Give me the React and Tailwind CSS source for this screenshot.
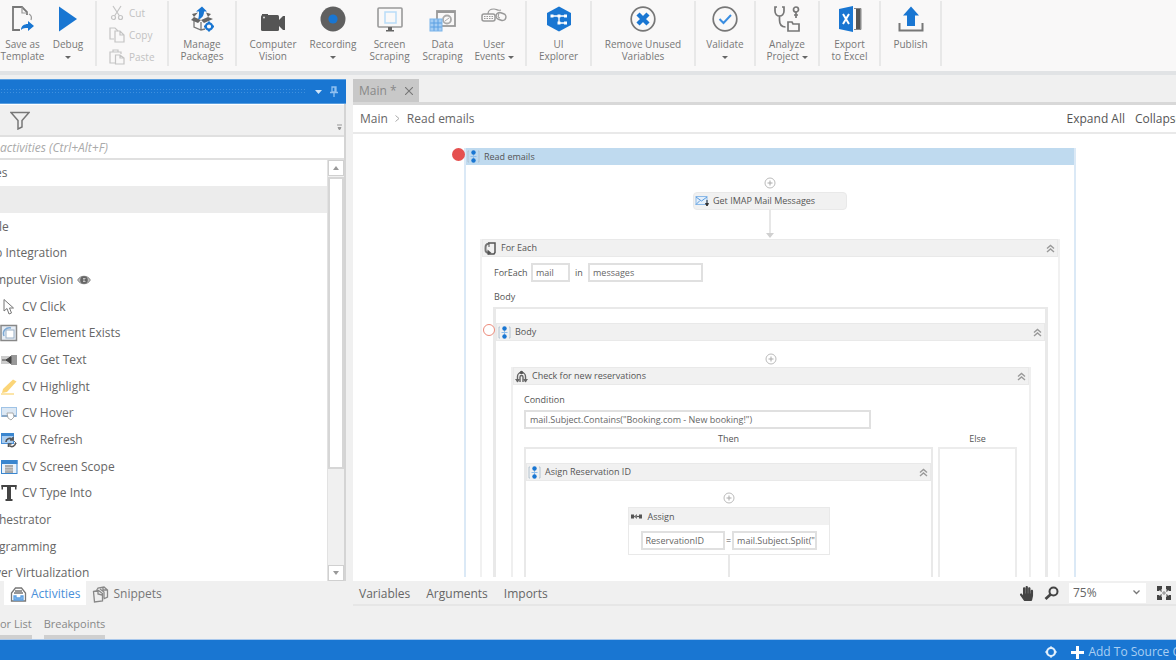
import { useState } from "react";
import { FaHandPaper } from "react-icons/fa";

/* ---------- Ribbon icons ---------- */

const SaveTemplateIcon = () => (
  <svg width="26" height="28" viewBox="0 0 26 28" fill="none">
    <path d="M17 10V7l-5-5H3v23h7" stroke="#777" strokeWidth="1.8" />
    <path d="M12 2v6h6M19 9c2 1 3 3 2 6" stroke="#999" strokeWidth="1.2" />
    <path d="M11 25c0-4 3-6 7-6v-3l6 5-6 5v-3c-3 0-5 0-7 2z" fill="#1976d2" />
  </svg>
);

const DebugIcon = () => (
  <svg width="20" height="28" viewBox="0 0 20 28">
    <path d="M1 1.500v25l18-12.500z" fill="#1976d2" />
  </svg>
);

const PackagesIcon = () => (
  <svg width="26" height="28" viewBox="0 0 26 28" fill="none">
    <path d="M5 14v8l7 3 4-1M12 17v8" stroke="#777" strokeWidth="1.300" />
    <path d="M5 12l7 3-3 3-7-3zM19 12l-7 3 3 3 9-4zM5 12l-2-3 6-1.500M19 12l3-3-5-1.500" fill="#666" />
    <path d="M13 1.500l5 5h-3c0 4-2 7-6 8 1-3 1-5 1-8H7z" fill="#1976d2" />
    <circle cx="20" cy="21.500" r="3.200" stroke="#1976d2" strokeWidth="2.200" />
    <path d="M20 16.500v1.500M20 25v1.500M15 21.500h1.500M23.500 21.500h1.500" stroke="#1976d2" strokeWidth="2" />
  </svg>
);

const CameraIcon = () => (
  <svg width="28" height="28" viewBox="0 0 28 28" fill="#555">
    <rect x="2" y="10" width="18" height="16" rx="1.500" />
    <rect x="3" y="9" width="6" height="3" />
    <path d="M20 15l4-4h2v14h-2l-4-4z" />
    <circle cx="5" cy="12.500" r="1" fill="#ddd" />
  </svg>
);

const RecordingIcon = () => (
  <svg width="28" height="28" viewBox="0 0 28 28">
    <circle cx="14" cy="14" r="12.500" fill="#606060" />
    <circle cx="14" cy="14" r="4.600" fill="#1976d2" />
  </svg>
);

const ScreenIcon = () => (
  <svg width="28" height="28" viewBox="0 0 28 28" fill="none">
    <rect x="2" y="3" width="24" height="19" rx="1" stroke="#999" strokeWidth="1.600" />
    <rect x="9" y="7" width="11" height="11" stroke="#b9dcf7" strokeWidth="1.500" />
    <path d="M12 22h4v3h2v1.500h-8V25h2z" fill="#666" />
  </svg>
);

const DataIcon = () => (
  <svg width="28" height="28" viewBox="0 0 28 28" fill="none">
    <rect x="8" y="6" width="18" height="15" stroke="#999" strokeWidth="1.800" />
    <path d="M8 7h18" stroke="#999" strokeWidth="2" />
    <circle cx="18" cy="14.500" r="4" stroke="#aaa" strokeWidth="1.800" />
    <path d="M16 16l4-3" stroke="#aaa" />
    <rect x="1" y="14" width="12" height="12" fill="#a5cdf3" />
    <path d="M1 18h12M1 22h12M5 14v12M9 14v12" stroke="#5a9fe2" />
    <rect x="1" y="14" width="12" height="12" stroke="#7ab3e9" />
  </svg>
);

const UserEventsIcon = () => (
  <svg width="28" height="28" viewBox="0 0 28 28" fill="none" stroke="#999">
    <rect x="2" y="9" width="13" height="7" rx="2" strokeWidth="1.500" />
    <path d="M4 11.500h9M4 13.500h9" strokeDasharray="1.500 1" />
    <path d="M8 9c0-4 3-5 6-5s3 2 7 1" strokeWidth="1.200" />
    <rect x="16" y="8" width="10" height="7" rx="3.500" transform="rotate(20 21 11.500)" strokeWidth="1.500" />
    <path d="M19 8l-1 4 2 1" />
  </svg>
);

const ExplorerIcon = () => (
  <svg width="28" height="28" viewBox="0 0 28 28" fill="none">
    <path d="M14 1.500l12 6.500v12l-12 6.500L2 20V8z" fill="#1976d2" />
    <path d="M7 11h14M14 11v7h7" stroke="#fff" strokeWidth="1.300" />
    <g fill="#fff">
      <rect x="5.500" y="9.500" width="3" height="3" />
      <rect x="12.500" y="9.500" width="3" height="3" />
      <rect x="19" y="9.500" width="3" height="3" />
      <rect x="12.500" y="16.500" width="3" height="3" />
      <rect x="19" y="16.500" width="3" height="3" />
    </g>
  </svg>
);

const RemoveIcon = () => (
  <svg width="28" height="28" viewBox="0 0 28 28" fill="none">
    <circle cx="14" cy="14" r="11.800" stroke="#777" strokeWidth="1.700" />
    <path d="M9 9l10 10M19 9L9 19" stroke="#1976d2" strokeWidth="4.400" />
  </svg>
);

const ValidateIcon = () => (
  <svg width="28" height="28" viewBox="0 0 28 28" fill="none">
    <circle cx="14" cy="14" r="11.800" stroke="#777" strokeWidth="1.700" />
    <path d="M8.500 14l4 4 7.500-8" stroke="#3a8de0" strokeWidth="2" />
  </svg>
);

const AnalyzeIcon = () => (
  <svg width="28" height="28" viewBox="0 0 28 28" fill="none" stroke="#777" strokeWidth="1.700">
    <path d="M4 2H2v4c0 3 2 5 4.500 5S11 9 11 6V2H9M6.500 11v4c0 4 2 7 6 7" />
    <path d="M15 17h4l1 2h6v7H15z" />
    <circle cx="23" cy="4.500" r="2.500" />
    <path d="M23 7v6M21 10h4" />
  </svg>
);

const ExcelIcon = () => (
  <svg width="26" height="28" viewBox="0 0 26 28" fill="none">
    <path d="M2 4l14-3v26L2 24z" fill="#1976d2" />
    <path d="M6 9l6 10M12 9L6 19" stroke="#fff" strokeWidth="2" />
    <path d="M17 3.500h7v21h-7" stroke="#888" />
    <rect x="19" y="4" width="4.500" height="20" fill="#555" />
  </svg>
);

const PublishIcon = () => (
  <svg width="28" height="28" viewBox="0 0 28 28" fill="none">
    <path d="M14 1.500l8 9h-4V21h-8V10.500H6z" fill="#1976d2" />
    <path d="M2.500 18v7.500h23V18" stroke="#777" strokeWidth="2" />
  </svg>
);

const CutIcon = () => (
  <svg width="16" height="16" viewBox="0 0 16 16" fill="none" stroke="#c4c4c4" strokeWidth="1.200">
    <path d="M4 1l6.500 10M12 1L5.500 11" />
    <circle cx="4.500" cy="12.500" r="2" />
    <circle cx="11.500" cy="12.500" r="2" />
  </svg>
);

const CopyIcon = () => (
  <svg width="16" height="16" viewBox="0 0 16 16" fill="none" stroke="#c4c4c4" strokeWidth="1.200">
    <path d="M5 12H1V1h5l3 3" />
    <path d="M6 4h5l4 4v7H6zM11 4v4h4" />
  </svg>
);

const PasteIcon = () => (
  <svg width="16" height="16" viewBox="0 0 16 16" fill="none" stroke="#c4c4c4" strokeWidth="1.200">
    <path d="M6 14H1V3h11v2M4 3V1h5v2M6.500 6H11l4 3v6H6.500zM11 6v3h4" />
  </svg>
);

const Caret = () => (
  <svg width="6" height="3" viewBox="0 0 6 3" className="inline-block" fill="#666">
    <path d="M0 0h6L3 3z" />
  </svg>
);

/* ---------- Activity list icons ---------- */

const EyeIcon = () => (
  <svg width="14" height="12" viewBox="0 0 14 12" fill="none">
    <path d="M.7 6C3 1 11 1 13.300 6 11 11 3 11 .7 6z" fill="#bbb" stroke="#888" />
    <circle cx="7" cy="6" r="3.800" fill="#666" />
    <path d="M6 4.500h2.500M6 6h2M6 7.500h2.500" stroke="#ddd" strokeWidth=".8" />
  </svg>
);

const ClickIcon = () => (
  <svg width="18" height="18" viewBox="0 0 18 18" fill="#fff" stroke="#777">
    <path d="M4 1.500v11.500l3-2.500 2 5.500 2.500-1-2-5h4z" />
  </svg>
);

const ExistsIcon = () => (
  <svg width="18" height="18" viewBox="0 0 18 18" fill="none">
    <rect x="1" y="1.500" width="15.500" height="15" fill="#e6edf5" stroke="#888" strokeWidth="1.500" />
    <rect x="6" y="6" width="8" height="8" fill="#fff" stroke="#9ab0c6" />
    <path d="M4 12C2 7 6 3 11 4" stroke="#7ba8d4" strokeWidth="1.500" />
  </svg>
);

const GetTextIcon = () => (
  <svg width="18" height="18" viewBox="0 0 18 18" fill="none">
    <rect x="1" y="5" width="16" height="8" fill="#ccc" />
    <rect x="11" y="4" width="6" height="10" fill="#999" />
    <path d="M2 9h5M6 9l5-3.500v7z" stroke="#444" fill="#444" />
  </svg>
);

const HighlightIcon = () => (
  <svg width="18" height="18" viewBox="0 0 18 18">
    <path d="M3 11L13 1.500l3.500 2L7 14l-5 1z" fill="#fbd578" />
    <path d="M1 16h13" stroke="#fbdc8c" strokeWidth="1.500" />
  </svg>
);

const HoverIcon = () => (
  <svg width="18" height="18" viewBox="0 0 18 18">
    <rect x="1.500" y="3.500" width="15" height="9" fill="#dce8f4" stroke="#9fc3e6" />
    <path d="M2 11h14v2H2z" fill="#8aa7c4" />
    <path d="M7 9l1 5 3 2 3-3-1-4z" fill="#fff" stroke="#999" strokeWidth=".8" />
  </svg>
);

const RefreshIcon = () => (
  <svg width="18" height="18" viewBox="0 0 18 18" fill="none">
    <rect x="1.500" y="2.500" width="12" height="10" fill="#a9cdf0" stroke="#4a90d9" />
    <path d="M1 3.500h13" stroke="#3a86cf" strokeWidth="3" />
    <path d="M6 11a3.500 3.500 0 016-2.500M13 6v3h-3M15.500 12a3.500 3.500 0 01-6 2.500M8.500 16v-3h3" stroke="#555" strokeWidth="1.600" />
    <path d="M13 9l3.500 3.500" stroke="#777" />
  </svg>
);

const ScopeIcon = () => (
  <svg width="18" height="18" viewBox="0 0 18 18">
    <rect x="1.500" y="2.500" width="15.500" height="13" fill="#e9f2fb" stroke="#3a86cf" />
    <rect x="1" y="2" width="16.500" height="4" fill="#3a86cf" />
    <path d="M5 7h8v8H5z" fill="#aaa" />
    <path d="M5 9.500h8M5 12h8" stroke="#ccc" />
  </svg>
);

const TypeIcon = () => (
  <svg width="18" height="18" viewBox="0 0 18 18" fill="#444">
    <rect x="1.500" y="1" width="15" height="2" />
    <rect x="1.500" y="1" width="1.500" height="4.500" />
    <rect x="15" y="1" width="1.500" height="4.500" />
    <rect x="7" y="1" width="4" height="15" />
    <rect x="5.500" y="15" width="7" height="2" />
  </svg>
);

/* ---------- Designer icons ---------- */

const SequenceIcon = () => (
  <svg width="13" height="13" viewBox="0 0 13 13" fill="none">
    <path d="M2 1H1v11h1M11 1h1v11h-1" stroke="#aebfce" strokeWidth=".9" />
    <path d="M6.500 3v7M3.500 6.500h6" stroke="#8fbdea" />
    <circle cx="6.500" cy="2.500" r="2.200" fill="#1976d2" />
    <circle cx="6.500" cy="10.500" r="2.200" fill="#1976d2" />
  </svg>
);

const LoopIcon = () => (
  <svg width="13" height="13" viewBox="0 0 13 13" fill="none">
    <path d="M4 1h7v9.500L10 12H4" stroke="#555" strokeWidth="1.500" />
    <path d="M5 1.500C1.500 2 1.500 4 1.500 6.500s0 4 3 4.500" stroke="#777" strokeWidth="2" />
    <path d="M3.500 7.500l4 3.500-4 2z" fill="#555" />
    <path d="M5 1v4" stroke="#555" />
  </svg>
);

const IfIcon = () => (
  <svg width="13" height="13" viewBox="0 0 13 13" fill="none">
    <path d="M2.500 12V6.500a4 4 0 018 0V12M5 12V7a1.500 1.500 0 013 0v5" stroke="#666" strokeWidth="1.400" />
    <path d="M0 9l2.500 3.500L5 9zM8 9l2.500 3.500L13 9z" fill="#666" />
    <circle cx="6.500" cy="2.500" r="1.700" fill="#555" />
  </svg>
);

const AssignIcon = () => (
  <svg width="13" height="9" viewBox="0 0 13 9" fill="none">
    <path d="M1 4.500h11" stroke="#555" strokeWidth="1.200" />
    <path d="M1 2.500h3v4H1zM9 2.500h3v4H9z" fill="#555" />
    <path d="M7 2L4 4.500 7 7" fill="#777" />
  </svg>
);

const MailIcon = () => (
  <svg width="14" height="12" viewBox="0 0 14 12" fill="none">
    <rect x="1" y="1.500" width="11" height="8" fill="#e4effa" stroke="#8bb9e8" />
    <path d="M1 2l5.500 4L12 2M1 9.500l4-4" stroke="#5c9ddf" />
    <path d="M12 5v5M10.500 8.500l1.500 2.500 1.500-2.500z" stroke="#333" fill="#333" />
  </svg>
);

const PlusCircle = () => (
  <button aria-label="Add activity" className="block">
    <svg width="12" height="12" viewBox="0 0 12 12" fill="none" stroke="#bbb">
      <circle cx="6" cy="6" r="5" />
      <path d="M6 3.500v5M3.500 6h5" stroke="#aaa" />
    </svg>
  </button>
);

const CollapseIcon = () => (
  <svg width="9" height="9" viewBox="0 0 9 9" fill="none" stroke="#999" strokeWidth="1.400">
    <path d="M1 4.500l3.500-3 3.500 3M1 8l3.500-3L8 8" />
  </svg>
);

/* ---------- Ribbon ---------- */

function Tool({ icon, lines, caret, className }) {
  return (
    <button className={`flex flex-col items-center pt-1 ${className}`}>
      {icon}
      <span className="mt-[5px] text-[10px] leading-3 text-center whitespace-nowrap">
        {lines[0]}
        <br />
        {lines[1]} {caret && <Caret />}
      </span>
    </button>
  );
}

function Group({ children }) {
  return <div className="flex shrink-0 border-r-2 border-[#e8e8e8] h-[65px]">{children}</div>;
}

function Ribbon() {
  return (
    <header className="flex overflow-hidden bg-[#f9f8f8] text-[#777] border-b-4 border-[#e1e3e5] h-[75px] pt-px shrink-0">
      <Group>
        <Tool className="w-[45px]" icon={<SaveTemplateIcon />} lines={["Save as", "Template"]} />
        <Tool className="w-[46px] mr-1" icon={<DebugIcon />} lines={["Debug", ""]} caret />
      </Group>
      <Group>
        <div className="flex flex-col gap-[6px] w-[70px] pl-3 pt-1 text-[10px] leading-4 text-[#c2c2c2]">
          <button className="flex items-center gap-1"><CutIcon />Cut</button>
          <button className="flex items-center gap-1"><CopyIcon />Copy</button>
          <button className="flex items-center gap-1"><PasteIcon />Paste</button>
        </div>
      </Group>
      <Group>
        <Tool className="w-[66px]" icon={<PackagesIcon />} lines={["Manage", "Packages"]} />
      </Group>
      <Group>
        <Tool className="w-[58px] ml-[7px]" icon={<CameraIcon />} lines={["Computer", "Vision"]} />
        <Tool className="w-[62px]" icon={<RecordingIcon />} lines={["Recording", ""]} caret />
        <Tool className="w-[51px]" icon={<ScreenIcon />} lines={["Screen", "Scraping"]} />
        <Tool className="w-[55px]" icon={<DataIcon />} lines={["Data", "Scraping"]} />
        <Tool className="w-[48px] mr-[7px]" icon={<UserEventsIcon />} lines={["User", "Events"]} caret />
      </Group>
      <Group>
        <Tool className="w-[63px]" icon={<ExplorerIcon />} lines={["UI", "Explorer"]} />
      </Group>
      <Group>
        <Tool className="w-[102px]" icon={<RemoveIcon />} lines={["Remove Unused", "Variables"]} />
      </Group>
      <Group>
        <Tool className="w-[58px]" icon={<ValidateIcon />} lines={["Validate", ""]} caret />
      </Group>
      <Group>
        <Tool className="w-[62px]" icon={<AnalyzeIcon />} lines={["Analyze", "Project"]} caret />
      </Group>
      <Group>
        <Tool className="w-[59px]" icon={<ExcelIcon />} lines={["Export", "to Excel"]} />
      </Group>
      <Group>
        <Tool className="w-[59px]" icon={<PublishIcon />} lines={["Publish", ""]} />
      </Group>
    </header>
  );
}

/* ---------- Activities panel ---------- */

const activities = [
  { text: "es" },
  { text: "", selected: true },
  { text: "le" },
  { text: "p Integration" },
  { text: "mputer Vision", eye: true },
  { text: "CV Click", icon: <ClickIcon /> },
  { text: "CV Element Exists", icon: <ExistsIcon /> },
  { text: "CV Get Text", icon: <GetTextIcon /> },
  { text: "CV Highlight", icon: <HighlightIcon /> },
  { text: "CV Hover", icon: <HoverIcon /> },
  { text: "CV Refresh", icon: <RefreshIcon /> },
  { text: "CV Screen Scope", icon: <ScopeIcon /> },
  { text: "CV Type Into", icon: <TypeIcon /> },
  { text: "hestrator" },
  { text: "gramming" },
  { text: "ver Virtualization" },
];

function ActivitiesPanel() {
  return (
    <aside className="flex flex-col w-[346px] shrink-0 min-h-0">
      <div className="flex items-center h-[25px] shrink-0 bg-[#1976d2] border-y border-[#5a9fe0] pr-2">
        <div className="flex-1 h-[7px] bg-[radial-gradient(#3f90de_1px,transparent_1px)] bg-[size:3px_3px]" />
        <button aria-label="Panel menu" className="pl-2 pr-1">
          <svg width="7" height="4" viewBox="0 0 7 4" fill="#cfe4f8"><path d="M0 0h7L3.500 4z" /></svg>
        </button>
        <button aria-label="Pin panel" className="ml-1">
          <svg width="8" height="11" viewBox="0 0 8 11" fill="none" stroke="#8fc0f0" strokeWidth="1.300">
            <path d="M2 1h4v5H2zM0 6.500h8M4 7v4M5 1v5" />
          </svg>
        </button>
      </div>
      <div className="flex flex-col flex-1 min-h-0 border-r-2 border-[#d4d4d4]">
        <div className="flex justify-between h-[31px] shrink-0 pl-[10px] pr-[2px] border-t border-white">
          <button aria-label="Filter">
            <svg width="20" height="19" viewBox="0 0 20 19" fill="none" stroke="#777" strokeWidth="1.500">
              <path d="M1 1.500h18l-7 8V16l-4 2V9.500z" />
            </svg>
          </button>
          <svg width="5" height="7" viewBox="0 0 5 7" className="self-end mb-1" stroke="#999" fill="#999">
            <path d="M0 1h5M1 3.500h3L2.500 6z" />
          </svg>
        </div>
        <input
          aria-label="Search activities"
          placeholder="activities (Ctrl+Alt+F)"
          className="block w-full h-[25px] shrink-0 bg-white border-t-2 border-b-2 border-[#e0e0e0] text-xs italic placeholder:text-[#aaa] outline-none"
        />
        <div className="flex flex-1 min-h-0 bg-white">
          <ul className="flex-1 overflow-hidden text-xs text-[#666]">
            {activities.map((a, i) => (
              <li
                key={i}
                className={`flex items-center h-[27px] nth-[3n+1]:h-[26px] whitespace-nowrap ${a.selected ? "bg-[#ececec]" : ""}`}
              >
                {a.icon ? (
                  <span className="flex items-center gap-1">{a.icon}{a.text}</span>
                ) : (
                  <span className={`flex items-center gap-1 ${/^(p|m|es|v)/.test(a.text) ? "-ml-[5px]" : "-ml-px"}`}>
                    {a.text}
                    {a.eye && <EyeIcon />}
                  </span>
                )}
              </li>
            ))}
          </ul>
          <div className="flex flex-col w-[17px] bg-[#f0f0f0] border-l border-[#e2e2e2]">
            <button aria-label="Scroll up" className="flex items-center justify-center h-4 bg-white border border-[#d0d0d0]">
              <svg width="6" height="4" viewBox="0 0 6 4" fill="#999"><path d="M0 4h6L3 0z" /></svg>
            </button>
            <div className="flex-[3] bg-white border-2 border-[#d6d6d6] mt-px" />
            <div className="flex-1" />
            <button aria-label="Scroll down" className="flex items-center justify-center h-4 bg-white border border-[#d0d0d0]">
              <svg width="6" height="4" viewBox="0 0 6 4" fill="#999"><path d="M0 0h6L3 4z" /></svg>
            </button>
          </div>
        </div>
      </div>
      <nav className="flex h-[25px] shrink-0 pl-1 text-xs text-[#777]">
        <button className="flex items-center gap-1 h-6 pt-[2px] px-[6px] bg-white text-[#4a90d9]">
          <svg width="17" height="17" viewBox="0 0 17 17" fill="none" stroke="#777" strokeWidth="1.300">
            <path d="M1.500 15V7l4-5h6l4 5v8z" />
            <path d="M5 5h7M4 7h9" />
            <path d="M4 10h2v2h5v-2h2v4H4z" fill="#9cc6ee" stroke="#5b9fe2" />
          </svg>
          Activities
        </button>
        <button className="flex items-center gap-1 h-6 pt-[2px] px-[6px]">
          <svg width="17" height="17" viewBox="0 0 17 17" fill="none" stroke="#888" strokeWidth="1.300">
            <path d="M1.500 5.500l5-1 4 3V15l-8 1zM6 5v3l4 1" />
            <path d="M4.500 4.500L6 2l6-1 3.500 3v7l-4 2M11 1v3h4M8 3l4 3v6" />
          </svg>
          Snippets
        </button>
      </nav>
    </aside>
  );
}

/* ---------- Designer ---------- */

function BlockHeader({ icon, title, collapsible }) {
  return (
    <div className="flex items-center h-[18px] shrink-0 gap-1 pl-px pr-[2px] bg-[#f1f1f1] border border-[#e9e9e9]">
      {icon}
      <span className="flex-1">{title}</span>
      {collapsible && (
        <button aria-label={`Collapse ${title}`}>
          <CollapseIcon />
        </button>
      )}
    </div>
  );
}

function Field({ label, value, className }) {
  return (
    <input
      aria-label={label}
      defaultValue={value}
      className={`h-[19px] min-w-0 pl-[3px] bg-white border-2 border-[#e0e0e0] text-[#666] outline-none ${className}`}
    />
  );
}

function AssignBlock() {
  return (
    <div className="w-[202px] border border-[#e9e9e9] pb-1 bg-white">
      <div className="flex items-center h-[17px] gap-[5px] pl-px bg-[#f1f1f1]">
        <AssignIcon />
        Assign
      </div>
      <div className="flex items-center gap-px px-3 pt-[6px]">
        <Field label="To" value="ReservationID" className="flex-1" />
        =
        <Field label="Value" value={'mail.Subject.Split("'} className="flex-1" />
      </div>
    </div>
  );
}

function ReservationCheck() {
  return (
    <section className="flex flex-col flex-1 min-h-0 ml-[15px] mr-[14px] mt-[2px] border-x-2 border-[#efefef]">
      <BlockHeader icon={<IfIcon />} title="Check for new reservations" collapsible />
      <div className="flex flex-col flex-1 min-h-0 pl-[11px] pr-3 pt-2">
        <label htmlFor="condition" className="leading-[14px]">Condition</label>
        <input
          id="condition"
          defaultValue={'mail.Subject.Contains("Booking.com - New booking!")'}
          className="mt-[3px] mr-[146px] h-[19px] px-1 bg-white border-2 border-[#e0e0e0] text-[#666] outline-none shrink-0"
        />
        <div className="flex flex-1 min-h-0 gap-[5px] pt-[2px]">
          <div className="flex flex-col flex-1">
            <h4 className="text-center leading-4">Then</h4>
            <div className="flex flex-col flex-1 items-stretch border-2 border-b-0 border-[#e9e9e9] pt-[14px]">
              <BlockHeader icon={<SequenceIcon />} title="Asign Reservation ID" collapsible />
              <div className="flex flex-col flex-1 items-center pt-[11px] gap-[3px]">
                <PlusCircle />
                <AssignBlock />
                <div className="-mt-[3px] w-[2px] flex-1 bg-[#e8e8e8]" />
              </div>
            </div>
          </div>
          <div className="flex flex-col w-[79px]">
            <h4 className="text-center leading-4">Else</h4>
            <div className="flex-1 border-2 border-b-0 border-[#ececec]" />
          </div>
        </div>
      </div>
    </section>
  );
}

function ForEachBlock() {
  return (
    <section className="flex flex-col flex-1 min-h-0 mx-[14px] border-x-2 border-[#f1f1f1]">
      <BlockHeader icon={<LoopIcon />} title="For Each" collapsible />
      <div className="flex items-center pl-3 pt-[6px]">
        <span className="w-[37px]">ForEach</span>
        <Field label="Item" value="mail" className="w-[39px]" />
        <span className="w-[18px] text-center">in</span>
        <Field label="Collection" value="messages" className="w-[115px]" />
      </div>
      <h3 className="pl-3 pt-2 leading-[14px]">Body</h3>
      <div className="relative flex flex-col flex-1 min-h-0 ml-[11px] mr-[10px] mt-[3px] pt-[14px] border-x-[3px] border-t-2 border-[#e9e9e9]">
        <button
          aria-label="Toggle breakpoint"
          className="absolute -left-[13px] top-[15px] size-3 rounded-full border-[1.5px] border-[#ec8a7a] bg-white"
        />
        <BlockHeader icon={<SequenceIcon />} title="Body" collapsible />
        <div className="flex justify-center pt-3 shrink-0">
          <PlusCircle />
        </div>
        <ReservationCheck />
      </div>
    </section>
  );
}

function Canvas() {
  return (
    <div className="flex flex-col flex-1 min-h-0 overflow-hidden bg-white pt-[14px] pb-1 pl-[111px] pr-[100px] text-[9px] leading-3 text-[#555]">
      <section className="relative flex flex-col flex-1 min-h-0 border-x-2 border-[#dbe9f6]">
        <button aria-label="Breakpoint" className="absolute -left-[14px] top-0 size-[13px] rounded-full bg-[#e5504f]" />
        <div className="flex items-center h-[17px] shrink-0 gap-1 pl-px bg-[#bfdaef]">
          <SequenceIcon />
          Read emails
        </div>
        <div className="flex flex-col items-center pt-3 shrink-0">
          <PlusCircle />
          <div className="flex items-center gap-1 w-[154px] h-[18px] mt-[3px] pl-px bg-[#f1f1f1] border border-[#e9e9e9] rounded-sm">
            <MailIcon />
            Get IMAP Mail Messages
          </div>
          <svg width="8" height="29" viewBox="0 0 8 29" fill="#d0d0d0">
            <path d="M3.500 0h1v23h-1zM0 23h8l-4 5z" />
          </svg>
        </div>
        <ForEachBlock />
      </section>
    </div>
  );
}

function Designer() {
  const [zoom, setZoom] = useState("75%");

  return (
    <main className="flex flex-col flex-1 min-w-0 ml-[7px]">
      <div className="flex h-[26px] shrink-0 border-b-[3px] border-[#d8d8d8]">
        <button className="flex items-center gap-2 px-[6px] bg-[#c8c8c8] text-xs text-[#888]">
          Main *
          <svg width="8" height="8" viewBox="0 0 9 9" stroke="#777" strokeWidth="1.200"><path d="M0 0l9 9M9 0L0 9" /></svg>
        </button>
      </div>
      <div className="flex items-center h-[29px] shrink-0 pl-[7px] bg-white border-b-2 border-[#e9e9e9] text-xs text-[#666] whitespace-nowrap overflow-hidden">
        <a href="#main">Main</a>
        <svg width="5" height="7" viewBox="0 0 5 7" className="mx-[7px]" fill="none" stroke="#aaa"><path d="M.5.5l3.500 3-3.500 3" /></svg>
        <a href="#read-emails">Read emails</a>
        <div className="flex gap-[10px] ml-auto text-[#555]">
          <button>Expand All</button>
          <button className="w-[41px] overflow-hidden text-left">Collapse</button>
        </div>
      </div>
      <Canvas />
      <div className="flex items-center h-[25px] shrink-0 pl-[6px] gap-4 text-xs text-[#666] border-b-2 border-[#e6e6e6]">
        <button className="pt-[2px]">Variables</button>
        <button className="pt-[2px]">Arguments</button>
        <button className="pt-[2px]">Imports</button>
        <div className="flex items-center gap-[10px] ml-auto pr-1 pt-px">
          <button aria-label="Pan"><FaHandPaper size={15} color="#444" /></button>
          <button aria-label="Zoom">
            <svg width="15" height="15" viewBox="0 0 15 15" fill="none" stroke="#444">
              <circle cx="9.500" cy="5.500" r="4" strokeWidth="2" />
              <path d="M6.500 8.500L1.500 13" strokeWidth="2.800" />
            </svg>
          </button>
          <div className="relative">
            <select
              aria-label="Zoom level"
              value={zoom}
              onChange={(e) => setZoom(e.target.value)}
              className="block appearance-none w-[77px] h-5 pl-1 bg-white text-xs text-[#666] outline-none"
            >
              <option>75%</option>
              <option>100%</option>
            </select>
            <svg width="7" height="5" viewBox="0 0 7 5" className="absolute right-[6px] top-[7px] pointer-events-none" fill="none" stroke="#777" strokeWidth="1.300">
              <path d="M.5.5l3 3 3-3" />
            </svg>
          </div>
          <button aria-label="Fit to screen">
            <svg width="16" height="16" viewBox="0 0 16 16" fill="#444">
              <path d="M1 1h5v3L5 5l1 1-1 1-1-2-1 1H1zM15 1h-5v3l1 1-1 1 1 1 1-2 1 1h2zM1 15h5v-3l-1-1 1-1-1-1-1 2-1-1H1zM15 15h-5v-3l1-1-1-1 1-1 1 2 1-1h2z" />
              <path d="M6 8h4M8 6v4" stroke="#888" />
            </svg>
          </button>
        </div>
      </div>
    </main>
  );
}

function App() {
  return (
    <div className="flex flex-col h-screen overflow-hidden bg-[#f0f0f0] font-['Open_Sans','Noto_Sans',sans-serif]">
      <Ribbon />
      <div className="flex flex-1 min-h-0 pt-1">
        <ActivitiesPanel />
        <Designer />
      </div>
      <div className="flex items-end gap-3 h-[33px] shrink-0 text-[11px] leading-4 text-[#888]">
        <button className="border-b-4 border-[#cfcfcf] pb-[3px]">or List</button>
        <button className="border-b-4 border-[#cfcfcf] pb-[3px]">Breakpoints</button>
      </div>
      <footer className="flex items-center justify-end gap-[14px] h-[21px] shrink-0 pt-1 bg-[#1976d2] border-t border-[#a9c8ec] text-xs leading-4 text-[#a9cff3] whitespace-nowrap overflow-hidden">
        <svg width="12" height="12" viewBox="0 0 12 12" fill="none" stroke="#e3f0fc">
          <circle cx="6" cy="6" r="4" strokeWidth="2.200" />
          <path d="M6 .3v2M6 9.700v2M.3 6h2M9.700 6h2" strokeWidth="1.500" />
        </svg>
        <button className="flex items-center gap-1 -mr-1">
          <svg width="13" height="13" viewBox="0 0 13 13" stroke="#fff" strokeWidth="3"><path d="M6.500 0v13M0 6.500h13" /></svg>
          Add To Source C
        </button>
      </footer>
    </div>
  );
}

export default App;
